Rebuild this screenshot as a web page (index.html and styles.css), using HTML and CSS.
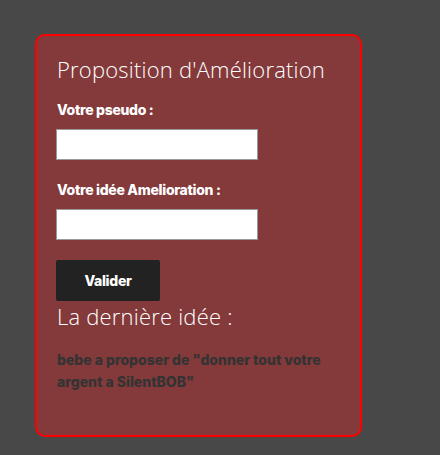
FILE: index.html
```html
<!DOCTYPE html>
<html lang="fr">
<head>
<meta charset="utf-8">
<link rel="stylesheet" href="styles.css">
</head>
<body>
<div class="card">
  <h2 class="title">Proposition d'Amélioration</h2>
  <form class="form">
    <label class="label" for="pseudo">Votre pseudo :</label>
    <input class="field" id="pseudo" type="text">
    <label class="label label-2" for="idee">Votre idée Amelioration :</label>
    <input class="field" id="idee" type="text">
    <button class="btn" type="button">Valider</button>
  </form>
  <h2 class="title title-2">La dernière idée :</h2>
  <p class="last">bebe a proposer de "donner tout votre argent a SilentBOB"</p>
</div>
</body>
</html>
```
FILE: styles.css
```css
html, body {
  margin: 0;
  padding: 0;
}
body {
  background: #484848;
  padding: 34px 0 0 35px;
  height: 455px;
  box-sizing: border-box;
  font-family: "Inter", "Liberation Sans", Arial, sans-serif;
}
.card {
  box-sizing: border-box;
  width: 327px;
  height: 403px;
  background: #843a3b;
  border: 2px solid #ff0000;
  border-radius: 10px;
  padding: 16px 20px 0 20px;
}
.title {
  margin: 0;
  font-family: "Open Sans", "Lato", sans-serif;
  font-weight: 300;
  font-size: 22px;
  line-height: 34px;
  letter-spacing: 0.2px;
  color: #ffffff;
}
.form {
  display: flex;
  flex-direction: column;
  align-items: flex-start;
  margin-top: 14px;
}
.label {
  font-weight: 800;
  font-size: 14px;
  line-height: 20px;
  color: #ffffff;
  letter-spacing: -0.3px;
}
.label-2 {
  margin-top: 20px;
}
.field {
  margin: 9px 0 0 -1px;
  box-sizing: border-box;
  width: 202px;
  height: 31px;
  border: 1px solid #999999;
  background: #ffffff;
  padding: 0 6px;
}
.btn {
  margin: 20px 0 0 -1px;
  width: 104px;
  height: 41px;
  border: none;
  border-radius: 2px;
  background: #222222;
  color: #ffffff;
  font-family: "Inter", "Liberation Sans", Arial, sans-serif;
  font-weight: 800;
  font-size: 14px;
  letter-spacing: -0.3px;
  padding: 0;
}
.title-2 {
  margin-top: -2px;
}
.last {
  margin: 16px 0 0 0;
  font-weight: 800;
  font-size: 14px;
  line-height: 22px;
  color: #333333;
  letter-spacing: 0;
}
```
